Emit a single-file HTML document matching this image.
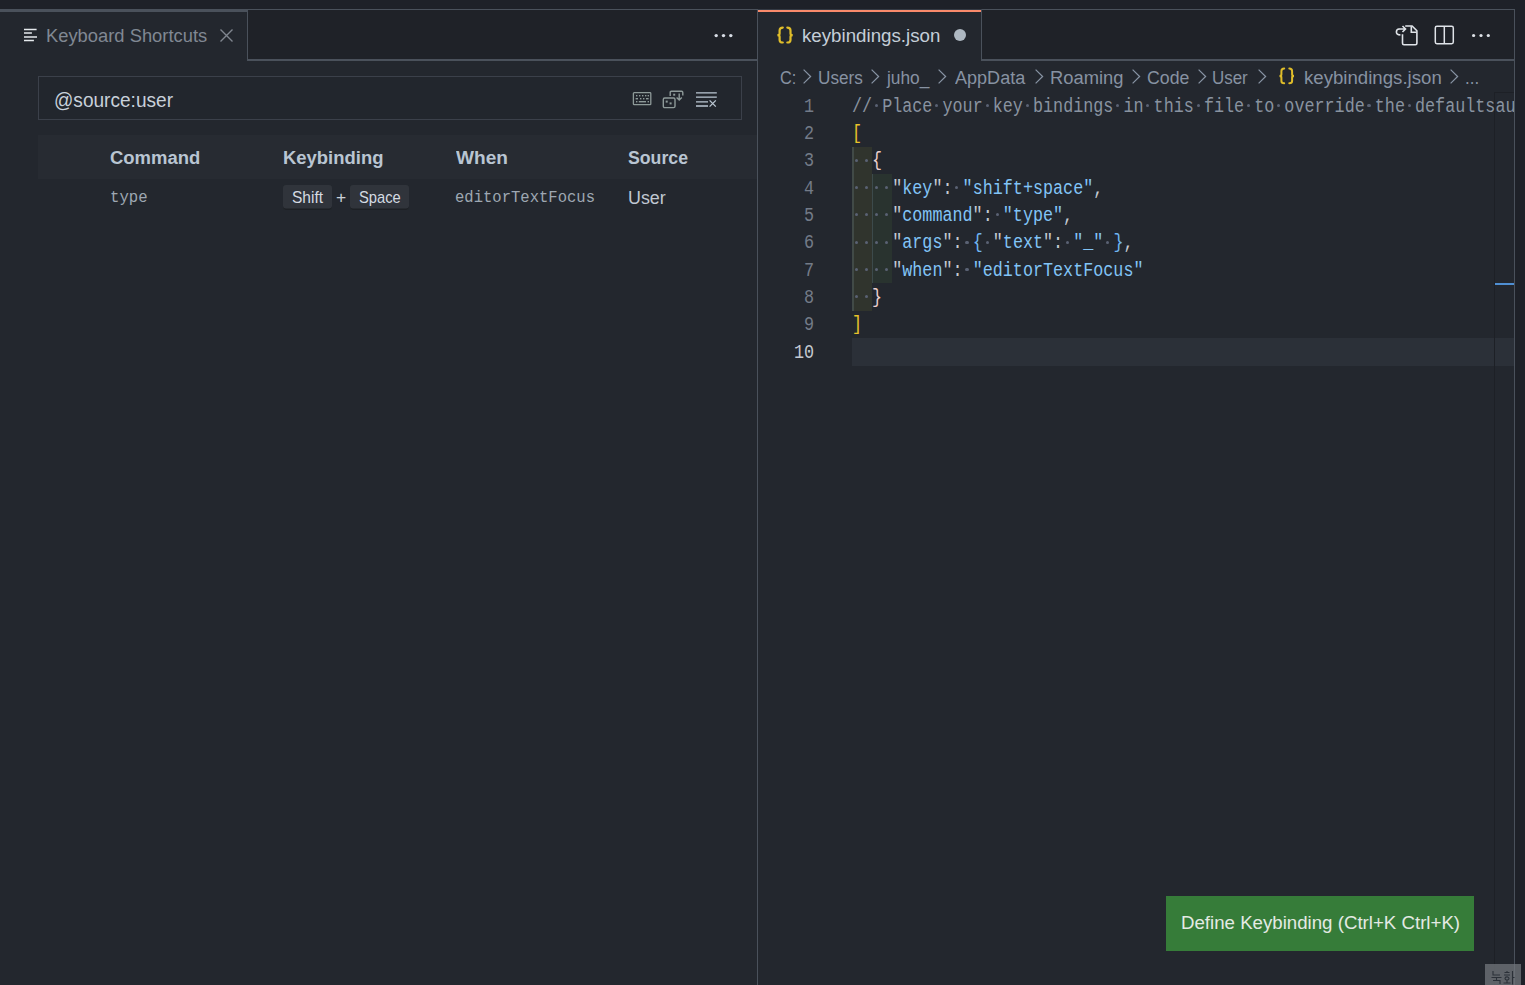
<!DOCTYPE html>
<html><head><meta charset="utf-8">
<style>
*{margin:0;padding:0;box-sizing:border-box}
html,body{width:1525px;height:985px;overflow:hidden;background:#23272e;font-family:"Liberation Sans",sans-serif}
.a{position:absolute}
.t{position:absolute;white-space:pre;transform-origin:0 0}
.code{font-family:"Liberation Mono",monospace;font-size:20.0px;line-height:20.0px}
svg{position:absolute;overflow:visible}
</style></head><body>
<!-- top strip -->
<div class="a" style="left:0;top:0;width:1525px;height:9px;background:#1e2128"></div>
<!-- left tab bar -->
<div class="a" style="left:0;top:9px;width:757px;height:52px;background:#1f2228;border-top:1px solid #4a515b;border-bottom:2px solid #4a515b"></div>
<div class="a" style="left:0;top:9px;width:248px;height:52px;background:#23272e;border-top:3px solid #4a515b;border-right:1px solid #4a515b"></div>
<!-- right tab bar -->
<div class="a" style="left:758px;top:9px;width:757px;height:52px;background:#1f2228;border-top:1px solid #4a515b;border-bottom:2px solid #4a515b"></div>
<div class="a" style="left:758px;top:9px;width:224px;height:52px;background:#23272e;border-top:1px solid #343a44;border-right:1px solid #4a515b"></div>
<div class="a" style="left:758px;top:10px;width:223px;height:2px;background:#f98a6b"></div>
<!-- separators -->
<div class="a" style="left:757px;top:9px;width:1px;height:976px;background:#4a515b"></div>
<div class="a" style="left:1514px;top:9px;width:1px;height:976px;background:#4a515b"></div>
<div class="a" style="left:1515px;top:9px;width:10px;height:976px;background:#1e2128"></div>

<!-- left tab icon (lines) -->
<svg style="left:24px;top:28px" width="14" height="14" viewBox="0 0 14 14"><g stroke="#e6eaee" stroke-width="1.5"><path d="M0 1.6H12.6M0 5.1H7.9M0 9.1H13M0 12.6H9.9"/></g></svg>
<!-- close X -->
<svg style="left:220px;top:29px" width="13" height="13" viewBox="0 0 13 13"><path d="M0.5 0.5L12.5 12.5M12.5 0.5L0.5 12.5" stroke="#80868f" stroke-width="1.4"/></svg>
<!-- left ... -->
<svg style="left:710px;top:30px" width="26" height="12"><circle cx="6.2" cy="5.6" r="1.7" fill="#d8dde6"/><circle cx="13.5" cy="5.6" r="1.7" fill="#d8dde6"/><circle cx="20.8" cy="5.6" r="1.7" fill="#d8dde6"/></svg>

<!-- right tab braces icon -->
<svg style="left:776px;top:26px" width="19" height="18" viewBox="0 0 19 18"><g fill="none" stroke="#dfbd2a" stroke-width="2.2" stroke-linecap="round"><path d="M6.8 1.6 Q3.6 1.6 3.6 4.5 V7.5 Q3.6 9.1 1.4 9.1 Q3.6 9.1 3.6 10.7 V13.9 Q3.6 16.5 6.8 16.5"/><path d="M11.3 1.6 Q14.5 1.6 14.5 4.5 V7.5 Q14.5 9.1 16.7 9.1 Q14.5 9.1 14.5 10.7 V13.9 Q14.5 16.5 11.3 16.5"/></g></svg>
<!-- dirty dot -->
<div class="a" style="left:954.2px;top:29.3px;width:12px;height:12px;border-radius:50%;background:#adb7c1"></div>
<!-- right icons -->
<svg style="left:1392px;top:22px" width="30" height="26" viewBox="0 0 30 26"><g fill="none" stroke="#dfe3e8" stroke-width="1.6">
  <path d="M10.5 12.3 V21.3 Q10.5 22.8 12 22.8 H23.4 Q24.9 22.8 24.9 21.3 V8.8 L20.1 4 H13.2"/>
  <path d="M19.3 4.3 V10.2 H24.7"/>
  <path d="M6.8 7 H13.4 M10.5 4 L13.5 7 L10.5 10"/>
  <path d="M7.2 7 C5.2 7 4.4 8.6 4.4 10 C4.4 11.6 5.8 12.9 8.4 12.9"/>
</g></svg>
<svg style="left:1434px;top:25px" width="21" height="20" viewBox="0 0 21 20">
  <rect x="1.3" y="1.3" width="18" height="17.4" rx="1.6" fill="none" stroke="#dfe3e8" stroke-width="1.5"/>
  <path d="M10.3 1.5 V18.5" stroke="#dfe3e8" stroke-width="1.5"/>
</svg>
<svg style="left:1468px;top:30px" width="26" height="12"><circle cx="5.6" cy="5.5" r="1.6" fill="#dfe3e8"/><circle cx="13" cy="5.5" r="1.6" fill="#dfe3e8"/><circle cx="20.3" cy="5.5" r="1.6" fill="#dfe3e8"/></svg>

<!-- search box -->
<div class="a" style="left:38px;top:76px;width:704px;height:44px;border:1px solid #3b404a;background:#22262d"></div>
<!-- keyboard icon -->
<svg style="left:632px;top:91px" width="21" height="16" viewBox="0 0 21 16">
  <rect x="1.4" y="1.7" width="17.4" height="12" rx="0.8" fill="none" stroke="#8e9a99" stroke-width="1.3"/>
  <g fill="#8e9a99"><rect x="4" y="4" width="1.4" height="1.4"/><rect x="7" y="4" width="1.4" height="1.4"/><rect x="10" y="4" width="1.4" height="1.4"/><rect x="13" y="4" width="1.4" height="1.4"/><rect x="15.6" y="4" width="1.4" height="1.4"/>
  <rect x="3.6" y="7" width="2.4" height="1.4"/><rect x="8" y="7" width="1.4" height="1.4"/><rect x="11" y="7" width="1.4" height="1.4"/><rect x="14" y="7" width="2.6" height="1.4"/>
  <rect x="4" y="10" width="1.4" height="1.4"/><rect x="6.8" y="10" width="7.2" height="1.4"/><rect x="15.6" y="10" width="1.4" height="1.4"/></g>
</svg>
<!-- record keys icon -->
<svg style="left:662px;top:90px" width="23" height="20" viewBox="0 0 23 20">
  <path d="M8.2 5.9 V2.4 Q8.2 1.2 9.4 1.2 H19.6 Q20.8 1.2 20.8 2.4 V5.4" fill="none" stroke="#8e9a99" stroke-width="1.4"/>
  <path d="M17.2 3.6 V9.6 M14.6 7.4 L17.2 10 L19.8 7.4" fill="none" stroke="#8e9a99" stroke-width="1.4"/>
  <rect x="11.2" y="3.7" width="2" height="2" fill="#8e9a99"/>
  <rect x="1.3" y="8" width="11.7" height="9.6" rx="1.4" fill="none" stroke="#8e9a99" stroke-width="1.4"/>
  <rect x="3.7" y="10.6" width="2" height="2" fill="#8e9a99"/><rect x="7.6" y="12.4" width="2" height="2" fill="#8e9a99"/>
</svg>
<!-- clear icon -->
<svg style="left:695px;top:91px" width="23" height="17" viewBox="0 0 23 17">
  <g stroke="#bcc8d4" stroke-width="1.3"><path d="M1 1.9H21.8M1 6.2H21.8M1 10.9H13M1 15H13"/><path d="M14.6 9.4L20.8 15.6M20.8 9.4L14.6 15.6"/></g>
</svg>

<!-- table header -->
<div class="a" style="left:38px;top:135px;width:719px;height:44px;background:#272b32"></div>
<!-- keycaps -->
<div class="a" style="left:283px;top:185px;width:49px;height:25px;border-radius:3px;background:#30343b;box-shadow:inset 0 -1.5px 0 #1d2025"></div>
<div class="a" style="left:350px;top:185px;width:59px;height:25px;border-radius:3px;background:#30343b;box-shadow:inset 0 -1.5px 0 #1d2025"></div>

<!-- editor -->
<div class="a" style="left:852px;top:146.67px;width:20px;height:164px;background:#30342d"></div>
<div class="a" style="left:852px;top:146.67px;width:1.5px;height:164px;background:#414a47"></div>
<div class="a" style="left:872px;top:174px;width:20px;height:109.33px;background:#29332f"></div>
<div class="a" style="left:872px;top:174px;width:1.2px;height:109.33px;background:#3c4a4b"></div>
<div class="a" style="left:852px;top:338px;width:662px;height:28px;background:#2b3038"></div>
<div class="a" style="left:1494px;top:92px;width:1px;height:893px;background:#1d2026"></div>
<div class="a" style="left:1494px;top:92px;width:20px;height:1px;background:#1d2026"></div>
<div class="a" style="left:1495px;top:283px;width:19px;height:2px;background:#4f8fd3"></div>

<!-- button -->
<div class="a" style="left:1166px;top:896px;width:308px;height:55px;background:#367c39;z-index:-0"></div>
<!-- breadcrumbs -->
<svg style="left:803.4px;top:69px" width="10" height="16" viewBox="0 0 10 16"><path d="M0.6 0.6 L7.6 7.5 L0.6 14.4" fill="none" stroke="#8894a4" stroke-width="1.25"/></svg>
<svg style="left:870.7px;top:69px" width="10" height="16" viewBox="0 0 10 16"><path d="M0.6 0.6 L7.6 7.5 L0.6 14.4" fill="none" stroke="#8894a4" stroke-width="1.25"/></svg>
<svg style="left:938.4px;top:69px" width="10" height="16" viewBox="0 0 10 16"><path d="M0.6 0.6 L7.6 7.5 L0.6 14.4" fill="none" stroke="#8894a4" stroke-width="1.25"/></svg>
<svg style="left:1035.4px;top:69px" width="10" height="16" viewBox="0 0 10 16"><path d="M0.6 0.6 L7.6 7.5 L0.6 14.4" fill="none" stroke="#8894a4" stroke-width="1.25"/></svg>
<svg style="left:1131.8px;top:69px" width="10" height="16" viewBox="0 0 10 16"><path d="M0.6 0.6 L7.6 7.5 L0.6 14.4" fill="none" stroke="#8894a4" stroke-width="1.25"/></svg>
<svg style="left:1197.7px;top:69px" width="10" height="16" viewBox="0 0 10 16"><path d="M0.6 0.6 L7.6 7.5 L0.6 14.4" fill="none" stroke="#8894a4" stroke-width="1.25"/></svg>
<svg style="left:1257.7px;top:69px" width="10" height="16" viewBox="0 0 10 16"><path d="M0.6 0.6 L7.6 7.5 L0.6 14.4" fill="none" stroke="#8894a4" stroke-width="1.25"/></svg>
<svg style="left:1450.0px;top:69px" width="10" height="16" viewBox="0 0 10 16"><path d="M0.6 0.6 L7.6 7.5 L0.6 14.4" fill="none" stroke="#8894a4" stroke-width="1.25"/></svg>
<svg style="left:1278px;top:67px" width="18" height="18" viewBox="0 0 18 18"><g fill="none" stroke="#dfbd2a" stroke-width="2" stroke-linecap="round"><path d="M6.2 1.6 Q3.4 1.6 3.4 4.3 V7.6 Q3.4 9 1.5 9 Q3.4 9 3.4 10.4 V13.9 Q3.4 16.2 6.2 16.2"/><path d="M11.3 1.6 Q14.1 1.6 14.1 4.3 V7.6 Q14.1 9 16 9 Q14.1 9 14.1 10.4 V13.9 Q14.1 16.2 11.3 16.2"/></g></svg>
<div class="t code" style="left:804.45px;top:96.80px;transform:scaleX(0.8374);color:#737b88">1</div>
<div class="t code" style="left:804.45px;top:124.13px;transform:scaleX(0.8374);color:#737b88">2</div>
<div class="t code" style="left:804.45px;top:151.47px;transform:scaleX(0.8374);color:#737b88">3</div>
<div class="t code" style="left:804.45px;top:178.80px;transform:scaleX(0.8374);color:#737b88">4</div>
<div class="t code" style="left:804.45px;top:206.13px;transform:scaleX(0.8374);color:#737b88">5</div>
<div class="t code" style="left:804.45px;top:233.47px;transform:scaleX(0.8374);color:#737b88">6</div>
<div class="t code" style="left:804.45px;top:260.80px;transform:scaleX(0.8374);color:#737b88">7</div>
<div class="t code" style="left:804.45px;top:288.13px;transform:scaleX(0.8374);color:#737b88">8</div>
<div class="t code" style="left:804.45px;top:315.47px;transform:scaleX(0.8374);color:#737b88">9</div>
<div class="t code" style="left:794.40px;top:342.80px;transform:scaleX(0.8374);color:#c5cad2">10</div>
<div class="a" style="left:0;top:0;width:1514px;height:985px;overflow:hidden">
<div class="a" style="left:874.97px;top:104.05px;width:3.1px;height:3.1px;border-radius:50%;background:#5a6274"></div>
<div class="a" style="left:935.27px;top:104.05px;width:3.1px;height:3.1px;border-radius:50%;background:#5a6274"></div>
<div class="a" style="left:985.52px;top:104.05px;width:3.1px;height:3.1px;border-radius:50%;background:#5a6274"></div>
<div class="a" style="left:1025.72px;top:104.05px;width:3.1px;height:3.1px;border-radius:50%;background:#5a6274"></div>
<div class="a" style="left:1116.17px;top:104.05px;width:3.1px;height:3.1px;border-radius:50%;background:#5a6274"></div>
<div class="a" style="left:1146.32px;top:104.05px;width:3.1px;height:3.1px;border-radius:50%;background:#5a6274"></div>
<div class="a" style="left:1196.57px;top:104.05px;width:3.1px;height:3.1px;border-radius:50%;background:#5a6274"></div>
<div class="a" style="left:1246.82px;top:104.05px;width:3.1px;height:3.1px;border-radius:50%;background:#5a6274"></div>
<div class="a" style="left:1276.97px;top:104.05px;width:3.1px;height:3.1px;border-radius:50%;background:#5a6274"></div>
<div class="a" style="left:1367.42px;top:104.05px;width:3.1px;height:3.1px;border-radius:50%;background:#5a6274"></div>
<div class="a" style="left:1407.62px;top:104.05px;width:3.1px;height:3.1px;border-radius:50%;background:#5a6274"></div>
<div class="t code" style="left:852.0px;top:96.80px;transform:scaleX(0.8374)"><span style="color:#8993a0">//</span> <span style="color:#8993a0">Place</span> <span style="color:#8993a0">your</span> <span style="color:#8993a0">key</span> <span style="color:#8993a0">bindings</span> <span style="color:#8993a0">in</span> <span style="color:#8993a0">this</span> <span style="color:#8993a0">file</span> <span style="color:#8993a0">to</span> <span style="color:#8993a0">override</span> <span style="color:#8993a0">the</span> <span style="color:#8993a0">defaultsauto[]</span></div>
<div class="t code" style="left:852.0px;top:124.13px;transform:scaleX(0.8374)"><span style="color:#e9c22a">[</span></div>
<div class="a" style="left:854.87px;top:158.72px;width:3.1px;height:3.1px;border-radius:50%;background:#5a6274"></div>
<div class="a" style="left:864.92px;top:158.72px;width:3.1px;height:3.1px;border-radius:50%;background:#5a6274"></div>
<div class="t code" style="left:852.0px;top:151.47px;transform:scaleX(0.8374)">  <span style="color:#eccfcd">{</span></div>
<div class="a" style="left:854.87px;top:186.05px;width:3.1px;height:3.1px;border-radius:50%;background:#5a6274"></div>
<div class="a" style="left:864.92px;top:186.05px;width:3.1px;height:3.1px;border-radius:50%;background:#5a6274"></div>
<div class="a" style="left:874.97px;top:186.05px;width:3.1px;height:3.1px;border-radius:50%;background:#5a6274"></div>
<div class="a" style="left:885.02px;top:186.05px;width:3.1px;height:3.1px;border-radius:50%;background:#5a6274"></div>
<div class="a" style="left:955.37px;top:186.05px;width:3.1px;height:3.1px;border-radius:50%;background:#5a6274"></div>
<div class="t code" style="left:852.0px;top:178.80px;transform:scaleX(0.8374)">    <span style="color:#c3cad3">&quot;</span><span style="color:#82c4f6">key</span><span style="color:#c3cad3">&quot;:</span> <span style="color:#82c4f6">&quot;shift+space&quot;</span><span style="color:#c3cad3">,</span></div>
<div class="a" style="left:854.87px;top:213.38px;width:3.1px;height:3.1px;border-radius:50%;background:#5a6274"></div>
<div class="a" style="left:864.92px;top:213.38px;width:3.1px;height:3.1px;border-radius:50%;background:#5a6274"></div>
<div class="a" style="left:874.97px;top:213.38px;width:3.1px;height:3.1px;border-radius:50%;background:#5a6274"></div>
<div class="a" style="left:885.02px;top:213.38px;width:3.1px;height:3.1px;border-radius:50%;background:#5a6274"></div>
<div class="a" style="left:995.57px;top:213.38px;width:3.1px;height:3.1px;border-radius:50%;background:#5a6274"></div>
<div class="t code" style="left:852.0px;top:206.13px;transform:scaleX(0.8374)">    <span style="color:#c3cad3">&quot;</span><span style="color:#82c4f6">command</span><span style="color:#c3cad3">&quot;:</span> <span style="color:#82c4f6">&quot;type&quot;</span><span style="color:#c3cad3">,</span></div>
<div class="a" style="left:854.87px;top:240.72px;width:3.1px;height:3.1px;border-radius:50%;background:#5a6274"></div>
<div class="a" style="left:864.92px;top:240.72px;width:3.1px;height:3.1px;border-radius:50%;background:#5a6274"></div>
<div class="a" style="left:874.97px;top:240.72px;width:3.1px;height:3.1px;border-radius:50%;background:#5a6274"></div>
<div class="a" style="left:885.02px;top:240.72px;width:3.1px;height:3.1px;border-radius:50%;background:#5a6274"></div>
<div class="a" style="left:965.42px;top:240.72px;width:3.1px;height:3.1px;border-radius:50%;background:#5a6274"></div>
<div class="a" style="left:985.52px;top:240.72px;width:3.1px;height:3.1px;border-radius:50%;background:#5a6274"></div>
<div class="a" style="left:1065.92px;top:240.72px;width:3.1px;height:3.1px;border-radius:50%;background:#5a6274"></div>
<div class="a" style="left:1106.12px;top:240.72px;width:3.1px;height:3.1px;border-radius:50%;background:#5a6274"></div>
<div class="t code" style="left:852.0px;top:233.47px;transform:scaleX(0.8374)">    <span style="color:#c3cad3">&quot;</span><span style="color:#82c4f6">args</span><span style="color:#c3cad3">&quot;:</span> <span style="color:#6fb5f0">{</span> <span style="color:#c3cad3">&quot;</span><span style="color:#82c4f6">text</span><span style="color:#c3cad3">&quot;:</span> <span style="color:#82c4f6">&quot;_&quot;</span> <span style="color:#6fb5f0">}</span><span style="color:#c3cad3">,</span></div>
<div class="a" style="left:854.87px;top:268.05px;width:3.1px;height:3.1px;border-radius:50%;background:#5a6274"></div>
<div class="a" style="left:864.92px;top:268.05px;width:3.1px;height:3.1px;border-radius:50%;background:#5a6274"></div>
<div class="a" style="left:874.97px;top:268.05px;width:3.1px;height:3.1px;border-radius:50%;background:#5a6274"></div>
<div class="a" style="left:885.02px;top:268.05px;width:3.1px;height:3.1px;border-radius:50%;background:#5a6274"></div>
<div class="a" style="left:965.42px;top:268.05px;width:3.1px;height:3.1px;border-radius:50%;background:#5a6274"></div>
<div class="t code" style="left:852.0px;top:260.80px;transform:scaleX(0.8374)">    <span style="color:#c3cad3">&quot;</span><span style="color:#82c4f6">when</span><span style="color:#c3cad3">&quot;:</span> <span style="color:#82c4f6">&quot;editorTextFocus&quot;</span></div>
<div class="a" style="left:854.87px;top:295.38px;width:3.1px;height:3.1px;border-radius:50%;background:#5a6274"></div>
<div class="a" style="left:864.92px;top:295.38px;width:3.1px;height:3.1px;border-radius:50%;background:#5a6274"></div>
<div class="t code" style="left:852.0px;top:288.13px;transform:scaleX(0.8374)">  <span style="color:#eccfcd">}</span></div>
<div class="t code" style="left:852.0px;top:315.47px;transform:scaleX(0.8374)"><span style="color:#e9c22a">]</span></div>
<div class="t code" style="left:852.0px;top:342.80px;transform:scaleX(0.8374)"></div>
</div>
<div class="t" style="left:45.52px;top:27.10px;font:18.8px 'Liberation Sans';line-height:18.8px;color:#808893;transform:scaleX(0.9770);">Keyboard Shortcuts</div>
<div class="t" style="left:801.90px;top:27.10px;font:18.8px 'Liberation Sans';line-height:18.8px;color:#c5ced8;transform:scaleX(0.9963);">keybindings.json</div>
<div class="t" style="left:54.05px;top:89.80px;font:20px 'Liberation Sans';line-height:20.0px;color:#c8d0da;transform:scaleX(0.9538);">@source:user</div>
<div class="t" style="left:110.30px;top:149.10px;font:bold 18.8px 'Liberation Sans';line-height:18.8px;color:#b9c5d2;transform:scaleX(0.9830);">Command</div>
<div class="t" style="left:282.82px;top:149.10px;font:bold 18.8px 'Liberation Sans';line-height:18.8px;color:#b9c5d2;transform:scaleX(0.9823);">Keybinding</div>
<div class="t" style="left:455.70px;top:149.10px;font:bold 18.8px 'Liberation Sans';line-height:18.8px;color:#b9c5d2;transform:scaleX(1.0149);">When</div>
<div class="t" style="left:628.40px;top:149.10px;font:bold 18.8px 'Liberation Sans';line-height:18.8px;color:#b9c5d2;transform:scaleX(0.9427);">Source</div>
<div class="t" style="left:109.77px;top:190.10px;font:16.8px 'Liberation Mono';line-height:16.8px;color:#9ea7b2;transform:scaleX(0.9317);">type</div>
<div class="t" style="left:454.77px;top:190.10px;font:16.8px 'Liberation Mono';line-height:16.8px;color:#9ea7b2;transform:scaleX(0.9269);">editorTextFocus</div>
<div class="t" style="left:627.81px;top:189.00px;font:18px 'Liberation Sans';line-height:18.0px;color:#c0c8d2;transform:scaleX(0.9943);">User</div>
<div class="t" style="left:291.60px;top:189.40px;font:16.4px 'Liberation Sans';line-height:16.4px;color:#d5dbe2;transform:scaleX(0.9476);">Shift</div>
<div class="t" style="left:336.20px;top:189.40px;font:16.4px 'Liberation Sans';line-height:16.4px;color:#c9d0d8;transform:scaleX(1.0667);">+</div>
<div class="t" style="left:358.90px;top:189.40px;font:16.4px 'Liberation Sans';line-height:16.4px;color:#d5dbe2;transform:scaleX(0.8973);">Space</div>
<div class="t" style="left:779.80px;top:68.60px;font:18px 'Liberation Sans';line-height:18.0px;color:#8792a2;transform:scaleX(0.9059);">C:</div>
<div class="t" style="left:818.15px;top:68.60px;font:18px 'Liberation Sans';line-height:18.0px;color:#8792a2;transform:scaleX(0.9521);">Users</div>
<div class="t" style="left:887.46px;top:68.60px;font:18px 'Liberation Sans';line-height:18.0px;color:#8792a2;transform:scaleX(0.9624);">juho_</div>
<div class="t" style="left:954.80px;top:68.60px;font:18px 'Liberation Sans';line-height:18.0px;color:#8792a2;transform:scaleX(1.0023);">AppData</div>
<div class="t" style="left:1049.58px;top:68.60px;font:18px 'Liberation Sans';line-height:18.0px;color:#8792a2;transform:scaleX(1.0196);">Roaming</div>
<div class="t" style="left:1146.60px;top:68.60px;font:18px 'Liberation Sans';line-height:18.0px;color:#8792a2;transform:scaleX(0.9833);">Code</div>
<div class="t" style="left:1212.46px;top:68.60px;font:18px 'Liberation Sans';line-height:18.0px;color:#8792a2;transform:scaleX(0.9403);">User</div>
<div class="t" style="left:1304.26px;top:68.60px;font:18px 'Liberation Sans';line-height:18.0px;color:#8792a2;transform:scaleX(1.0353);">keybindings.json</div>
<div class="t" style="left:1464.66px;top:68.60px;font:18px 'Liberation Sans';line-height:18.0px;color:#8792a2;transform:scaleX(0.9383);">...</div>
<div class="t" style="left:1180.73px;top:913.30px;font:19.2px 'Liberation Sans';line-height:19.2px;color:#e4eae4;transform:scaleX(0.9728);">Define Keybinding (Ctrl+K Ctrl+K)</div>

<!-- recording badge -->
<div class="a" style="left:1485px;top:964px;width:36px;height:21px;background:rgba(118,122,128,0.72)"></div>
<svg style="left:1490px;top:970px" width="26" height="15" viewBox="0 0 26 15">
  <g stroke="#2b3038" stroke-width="1.1" fill="none">
   <path d="M3 1V5H10M1.5 7.5H11.5M6.5 7.5V10M3 10.5H10V14"/>
   <path d="M14.5 2.5H19.5M17 1V3M14 5H20M15 8.5A2 1.6 0 1 0 19 8.5A2 1.6 0 1 0 15 8.5M17 10.5V12.5M13.5 13H20.5M22.5 1V14.5M22.5 7.5H24.5"/>
  </g>
</svg>
</body></html>
